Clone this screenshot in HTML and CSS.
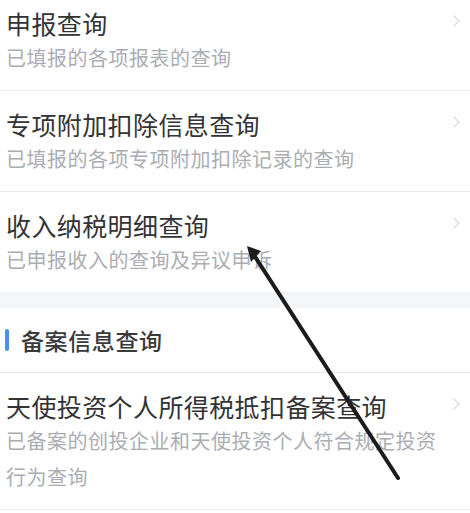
FILE: index.html
```html
<!DOCTYPE html>
<html lang="zh-CN">

<head>
    <meta charset="UTF-8">
    <title>查询</title>
    <link rel="stylesheet" href="styles.css">
</head>

<body>

    <main class="page">
        <section class="liste">
            <a class="punkt forste" href="#">
                <div class="tekst">
                    <h2 class="titel">申报查询</h2>
                    <p class="under">已填报的各项报表的查询</p>
                </div>
                <span class="pil"></span>
            </a>
            <a class="punkt" href="#">
                <div class="tekst">
                    <h2 class="titel">专项附加扣除信息查询</h2>
                    <p class="under">已填报的各项专项附加扣除记录的查询</p>
                </div>
                <span class="pil"></span>
            </a>
            <a class="punkt sidste" href="#">
                <div class="tekst">
                    <h2 class="titel">收入纳税明细查询</h2>
                    <p class="under">已申报收入的查询及异议申诉</p>
                </div>
                <span class="pil"></span>
            </a>
        </section>

        <div class="skille"></div>

        <section class="liste">
            <h3 class="sektion">备案信息查询</h3>
            <a class="punkt" href="#">
                <div class="tekst">
                    <h2 class="titel">天使投资个人所得税抵扣备案查询</h2>
                    <p class="under">已备案的创投企业和天使投资个人符合规定投资行为查询</p>
                </div>
                <span class="pil"></span>
            </a>
        </section>
    </main>

    <!-- markering lagt oven på skærmbilledet -->
    <svg class="markering" width="470" height="513" viewBox="0 0 470 513">
        <line x1="398" y1="478" x2="252" y2="252" stroke="#1c1c1c" stroke-width="4" stroke-linecap="round" />
        <polygon points="247,246 261,251 251,262" fill="#1c1c1c" />
    </svg>

</body>

</html>
```

FILE: styles.css
```css
body {
    margin: 0;
    background-color: white;
    font-family: "Noto Sans CJK SC", "Noto Sans", sans-serif;
    overflow: hidden;
}

.page {
    margin-top: -10px;
}

.liste {
    background-color: white;
}

.punkt {
    display: flex;
    align-items: flex-start;
    padding: 16px 10px 14px 6px;
    border-bottom: 1px solid #e9e9eb;
    text-decoration: none;
}

.punkt.sidste {
    border-bottom: none;
}

.tekst {
    flex: 1;
}

.titel {
    margin: 0;
    font-size: 25px;
    line-height: 34px;
    font-weight: 400;
    letter-spacing: 0.4px;
    color: #333335;
}

.under {
    margin: 0;
    font-size: 20px;
    line-height: 36px;
    letter-spacing: 0.5px;
    color: #abadb3;
}

.pil {
    flex-shrink: 0;
    width: 7px;
    height: 7px;
    margin-top: 11px;
    margin-right: 2px;
    border-top: 1.5px solid #d4d4d8;
    border-right: 1.5px solid #d4d4d8;
    transform: rotate(45deg);
}

.skille {
    height: 16px;
    background-color: #f5f6f8;
}

.sektion {
    display: flex;
    align-items: center;
    gap: 12px;
    height: 64px;
    margin: 0;
    padding-left: 5px;
    font-size: 23px;
    font-weight: 500;
    letter-spacing: 0.6px;
    color: #3a3a3c;
    border-bottom: 1px solid #e9e9eb;
}

.sektion::before {
    content: "";
    width: 4px;
    height: 22px;
    border-radius: 2px;
    background-color: #4a8ef5;
}

.markering {
    position: absolute;
    left: 0;
    top: 0;
}
```
